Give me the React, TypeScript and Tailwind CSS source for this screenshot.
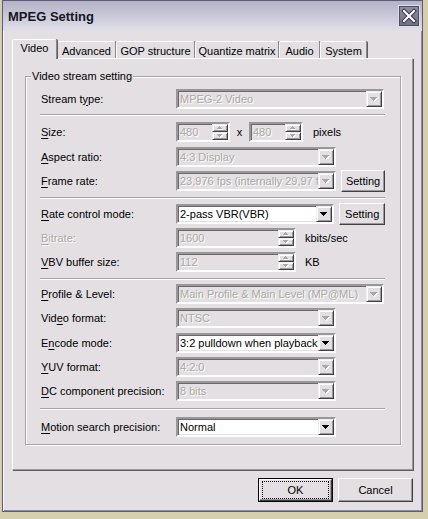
import type { ReactNode } from "react";

// colores del tema clásico
const DISABLED = "text-[#aca8a3] [text-shadow:1px_1px_0_#fff]";

function Arrow({ disabled }: { disabled?: boolean }) {
  const rows = [
    [0, 0, 7],
    [1, 1, 5],
    [2, 2, 3],
    [3, 3, 1],
  ];
  return (
    <svg width="8" height="5" viewBox="0 0 8 5" shapeRendering="crispEdges">
      {disabled &&
        rows.map(([x, y, w]) => (
          <rect key={`s${y}`} x={x + 1} y={y + 1} width={w} height={1} fill="#fff" />
        ))}
      {rows.map(([x, y, w]) => (
        <rect key={y} x={x} y={y} width={w} height={1} fill={disabled ? "#aca8a3" : "#000"} />
      ))}
    </svg>
  );
}

function SpinArrow({ up }: { up?: boolean }) {
  const rows = up
    ? [
        [2, 0, 1],
        [1, 1, 3],
        [0, 2, 5],
      ]
    : [
        [0, 0, 5],
        [1, 1, 3],
        [2, 2, 1],
      ];
  return (
    <svg width="6" height="4" viewBox="0 0 6 4" shapeRendering="crispEdges">
      {rows.map(([x, y, w]) => (
        <rect key={`s${y}`} x={x + 1} y={y + 1} width={w} height={1} fill="#fff" />
      ))}
      {rows.map(([x, y, w]) => (
        <rect key={y} x={x} y={y} width={w} height={1} fill="#aca8a3" />
      ))}
    </svg>
  );
}

function Label({ text, at, disabled }: { text: string; at: number; disabled?: boolean }) {
  return (
    <span className={disabled ? DISABLED : "text-black"}>
      {text.slice(0, at)}
      <span className="underline underline-offset-[2px]">{text[at]}</span>
      {text.slice(at + 1)}
    </span>
  );
}

const sunken =
  "border-2 border-t-[#99979a] border-l-[#99979a] border-r-white border-b-white shadow-[inset_1px_1px_0_#6b696b,inset_-1px_-1px_0_#e3dfe3]";

const raisedSmall =
  "border border-t-[#f1eff1] border-l-[#f1eff1] border-r-[#424042] border-b-[#424042] bg-[#e3dfe3] shadow-[inset_1px_1px_0_#fff,inset_-1px_-1px_0_#9a989a]";

function Combo({ value, width, disabled }: { value: string; width: string; disabled?: boolean }) {
  return (
    <div className={`flex h-[20px] ${width} ${sunken} ${disabled ? "bg-[#e3dfe3]" : "bg-white"}`}>
      <span
        className={`flex-1 overflow-hidden whitespace-nowrap pl-[2px] leading-[16px] ${
          disabled ? DISABLED : "text-black"
        }`}
      >
        {value}
      </span>
      <div className={`flex w-[16px] shrink-0 items-center justify-center ${raisedSmall}`}>
        <Arrow disabled={disabled} />
      </div>
    </div>
  );
}

function Spin({ value, width }: { value: string; width: string }) {
  return (
    <div className={`flex h-[20px] ${width} ${sunken} bg-[#e3dfe3]`}>
      <span className={`flex-1 overflow-hidden whitespace-nowrap pl-[2px] leading-[16px] ${DISABLED}`}>
        {value}
      </span>
      <div className="flex w-[16px] shrink-0 flex-col">
        <div className={`flex h-[8px] items-center justify-center ${raisedSmall}`}>
          <SpinArrow up />
        </div>
        <div className={`flex h-[8px] items-center justify-center ${raisedSmall}`}>
          <SpinArrow />
        </div>
      </div>
    </div>
  );
}

function Button({ children, className }: { children: ReactNode; className: string }) {
  return (
    <div
      className={`flex items-center justify-center border border-t-white border-l-white border-r-[#424042] border-b-[#424042] bg-[#e3dfe3] shadow-[inset_-1px_-1px_0_#9a989a] ${className}`}
    >
      {children}
    </div>
  );
}

function Separator({ className }: { className: string }) {
  return <div className={`-ml-[1px] h-[2px] border-t border-b border-t-[#a7a4a7] border-b-white ${className}`} />;
}

function Row({ label, className, children }: { label: ReactNode; className: string; children: ReactNode }) {
  return (
    <div className={`flex h-[20px] items-center ${className}`}>
      <div className="w-[135px] shrink-0">{label}</div>
      {children}
    </div>
  );
}

function CloseButton() {
  return (
    <svg width="22" height="22" viewBox="0 0 22 22">
      <defs>
        <linearGradient id="cb" x1="0" y1="0" x2="0" y2="1">
          <stop offset="0" stopColor="#8e8ea6" />
          <stop offset="1" stopColor="#6d6d88" />
        </linearGradient>
      </defs>
      <rect x="0.5" y="0.5" width="21" height="21" fill="url(#cb)" stroke="#dcdce6" />
      <rect x="1.5" y="1.5" width="19" height="19" fill="none" stroke="#4c4c64" />
      <path d="M6 6L16 16M16 6L6 16" stroke="#3a2a3a" strokeWidth="4" strokeLinecap="square" />
      <path d="M6 6L16 16M16 6L6 16" stroke="#ffffff" strokeWidth="2.2" strokeLinecap="square" />
    </svg>
  );
}

const tabs = [
  { name: "Video", w: "w-[45px]" },
  { name: "Advanced", w: "w-[59px]" },
  { name: "GOP structure", w: "w-[79px]" },
  { name: "Quantize matrix", w: "w-[84px]" },
  { name: "Audio", w: "w-[41px]" },
  { name: "System", w: "w-[47px]" },
];

export default function App() {
  return (
    <div className="h-[519px] w-[428px] bg-[#d6cfae] font-['Liberation_Sans',Arial,sans-serif] text-[11px] leading-[13px] select-none">
      <div className="ml-[2px] flex h-[512px] w-[421px] flex-col border border-[#5b5b7d] bg-[#e3dfe3] shadow-[inset_1px_1px_0_#fff,inset_-1px_-1px_0_#8c8ca4]">
        {/* Barra de título */}
        <div className="flex h-[30px] shrink-0 items-center justify-between bg-gradient-to-b from-[#b3b2c7] to-[#e1e0ea] pl-[5px] pr-[2px]">
          <span className="text-[13px] font-bold text-[#161622]">MPEG Setting</span>
          <CloseButton />
        </div>

        <div className="flex flex-1 flex-col pl-[9px] pt-[8px]">
          {/* Pestañas */}
          <div className="flex h-[19px] items-end">
            {tabs.map((t, i) => (
              <div
                key={t.name}
                className={`${t.w} flex justify-center rounded-t-[2px] border-t border-l border-r border-t-white border-l-white border-r-[#8a888a] bg-[#e3dfe3] shadow-[1px_0_0_#5f5d5f] ${
                  i === 0 ? "relative z-10 -mb-[1px] h-[20px] pt-[2px]" : "h-[17px] pt-[3px]"
                }`}
              >
                {t.name}
              </div>
            ))}
          </div>

          {/* Panel */}
          <div className="h-[412px] w-[401px] border border-t-white border-l-white border-r-[#9a989a] border-b-[#9a989a] shadow-[1px_1px_0_#5f5d5f]">
            <div className="relative ml-[12px] mt-[17px] w-[376px] border border-[#a7a4a7] pb-[7px] pl-[15px] pr-[15px] pt-[12px] shadow-[inset_1px_1px_0_#fff,1px_1px_0_#fff]">
              <span className="absolute -top-[7px] left-[5px] bg-[#e3dfe3] px-[1px]">Video stream setting</span>

              <Row label={<Label text="Stream type:" at={8} />} className="">
                <Combo value="MPEG-2 Video" width="w-[208px]" disabled />
              </Row>
              <Separator className="mt-[5px]" />
              <Row label={<Label text="Size:" at={0} />} className="mt-[6px]">
                <Spin value="480" width="w-[54px]" />
                <span className="w-[19px] text-center">x</span>
                <Spin value="480" width="w-[54px]" />
                <span className="ml-[10px]">pixels</span>
              </Row>
              <Row label={<Label text="Aspect ratio:" at={0} />} className="mt-[5px]">
                <Combo value="4:3 Display" width="w-[160px]" disabled />
              </Row>
              <Row label={<Label text="Frame rate:" at={0} />} className="mt-[4px]">
                <Combo value="23,976 fps (internally 29,97 fps)" width="w-[160px]" disabled />
                <Button className="ml-[5px] h-[22px] w-[46px]">Setting</Button>
              </Row>
              <Separator className="mt-[6px]" />
              <Row label={<Label text="Rate control mode:" at={0} />} className="mt-[5px]">
                <Combo value="2-pass VBR(VBR)" width="w-[160px]" />
                <Button className="ml-[5px] h-[22px] w-[46px]">Setting</Button>
              </Row>
              <Row label={<Label text="Bitrate:" at={0} disabled />} className="mt-[4px]">
                <Spin value="1600" width="w-[120px]" />
                <span className="ml-[9px]">kbits/sec</span>
              </Row>
              <Row label={<Label text="VBV buffer size:" at={0} />} className="mt-[4px]">
                <Spin value="112" width="w-[120px]" />
                <span className="ml-[9px]">KB</span>
              </Row>
              <Separator className="mt-[6px]" />
              <Row label={<Label text="Profile & Level:" at={0} />} className="mt-[4px]">
                <Combo value="Main Profile & Main Level (MP@ML)" width="w-[208px]" disabled />
              </Row>
              <Row label={<Label text="Video format:" at={3} />} className="mt-[4px]">
                <Combo value="NTSC" width="w-[160px]" disabled />
              </Row>
              <Row label={<Label text="Encode mode:" at={1} />} className="mt-[5px]">
                <Combo value="3:2 pulldown when playback" width="w-[160px]" />
              </Row>
              <Row label={<Label text="YUV format:" at={0} />} className="mt-[4px]">
                <Combo value="4:2:0" width="w-[160px]" disabled />
              </Row>
              <Row label={<Label text="DC component precision:" at={0} />} className="mt-[4px]">
                <Combo value="8 bits" width="w-[160px]" disabled />
              </Row>
              <Separator className="mt-[7px]" />
              <Row label={<Label text="Motion search precision:" at={0} />} className="mt-[7px]">
                <Combo value="Normal" width="w-[160px]" />
              </Row>
            </div>
          </div>

          {/* Botones */}
          <div className="mt-[8px] flex w-[401px] justify-end gap-[5px]">
            <div className="h-[24px] w-[75px] border border-black">
              <Button className="h-full w-full">
                <span className="flex h-[16px] w-[65px] items-center justify-center outline-1 outline-dotted outline-black">
                  OK
                </span>
              </Button>
            </div>
            <Button className="h-[24px] w-[75px]">Cancel</Button>
          </div>
        </div>
      </div>
    </div>
  );
}
